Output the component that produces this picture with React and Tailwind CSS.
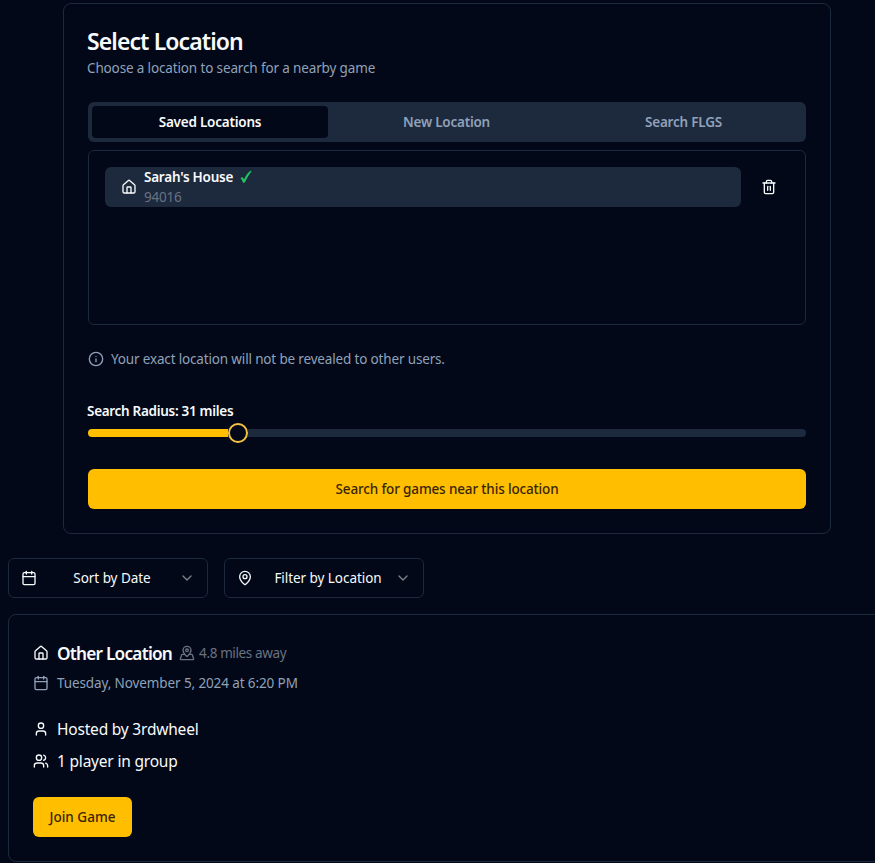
import {
  Calendar,
  ChevronDown,
  House,
  Info,
  MapPin,
  MapPinned,
  Trash2,
  User,
  Users,
} from "lucide-react";

function LocationCard() {
  return (
    <section className="ml-[63px] h-[531px] w-[768px] rounded-lg border border-slate-800 p-6">
      <h1 className="-ml-px flex h-[26px] items-center text-[23px] font-semibold leading-none tracking-[-0.9px]">
        <span>Select Location</span>
      </h1>
      <p className="-ml-px mt-1 text-[13.5px] leading-5 tracking-[-0.14px] text-slate-400">
        Choose a location to search for a nearby game
      </p>
      <div className="mt-6 grid h-10 grid-cols-[236px_237px_237px] rounded-md bg-slate-800 p-1 text-[13.5px] font-semibold tracking-[-0.22px] text-slate-400">
        <button className="rounded-sm bg-[#020817] text-slate-50">Saved Locations</button>
        <button>New Location</button>
        <button>Search FLGS</button>
      </div>
      <div className="mt-2 h-[175px] rounded-md border border-slate-800 p-4">
        <div className="flex h-10 items-center">
          <div className="flex h-10 w-[636px] shrink-0 items-center gap-[7px] rounded-md bg-slate-800 px-4">
            <House size={16} className="shrink-0" />
            <div className="text-[13.5px] leading-5">
              <div className="flex items-center gap-[7px] font-semibold tracking-[-0.23px]">
                <span>Sarah's House</span>
                <Tick />
              </div>
              <div className="tracking-[-0.2px] text-gray-500">94016</div>
            </div>
          </div>
          <button className="flex h-10 w-14 shrink-0 items-center justify-center">
            <Trash2 size={16} />
          </button>
        </div>
      </div>
      <div className="mt-6 flex h-5 items-center gap-[7px] text-[13.5px] tracking-[-0.16px] text-slate-400">
        <Info size={16} />
        <span>Your exact location will not be revealed to other users.</span>
      </div>
      <div className="-ml-px mt-8 text-[13.5px] font-semibold leading-5 tracking-[-0.3px]">
        Search Radius: 31 miles
      </div>
      <div className="mt-0.5 flex h-5 items-center">
        <div className="h-2 w-[140px] rounded-l-full bg-[#ffbf00]" />
        <div className="size-5 shrink-0 rounded-full border-2 border-[#f5c343] bg-[#020817]" />
        <div className="h-2 flex-1 rounded-r-full bg-slate-800" />
      </div>
      <button className="mt-[26px] h-10 w-full rounded-md bg-[#ffbf00] text-[13.5px] font-medium tracking-[-0.15px] text-[#3a2404]">
        Search for games near this location
      </button>
    </section>
  );
}

function Tick() {
  return (
    <svg width="12" height="14" viewBox="0 0 12 14" fill="#22c55e">
      <path d="M0.6 8.2 C1.6 7 2.8 7 3.4 8.2 L4 9.6 C5.8 5.6 8 2.6 10.6 0.8 L11.6 1.4 C9 4.4 6.8 8 5 12.2 L3.2 13 C2.4 11 1.8 9.4 0.6 8.2Z" />
    </svg>
  );
}

function Picker({ icon: Icon, label }) {
  return (
    <button className="flex h-10 w-[200px] items-center justify-between rounded-md border border-slate-800 px-3 text-[13.5px] tracking-[-0.05px]">
      <Icon size={16} className="mr-2" />
      <span>{label}</span>
      <ChevronDown size={16} className="opacity-50" />
    </button>
  );
}

function GameCard() {
  return (
    <section className="ml-2 mt-4 h-[248px] w-[900px] rounded-lg border border-slate-800 p-6">
      <div className="flex h-7 items-center">
        <House size={16} />
        <h2 className="ml-2 pt-0.5 text-[17.25px] font-semibold tracking-[-0.78px]">Other Location</h2>
        <MapPinned size={16} className="ml-[7px] text-gray-500" />
        <span className="ml-1 text-[13.5px] tracking-[-0.38px] text-gray-500">4.8 miles away</span>
      </div>
      <div className="mt-1.5 flex h-5 items-center gap-2 text-[13.5px] tracking-[-0.11px] text-slate-400">
        <Calendar size={16} />
        <span>Tuesday, November 5, 2024 at 6:20 PM</span>
      </div>
      <div className="mt-6 flex h-6 items-center gap-2 text-[15.5px] tracking-[-0.2px]">
        <User size={16} />
        <span className="pt-0.5">Hosted by 3rdwheel</span>
      </div>
      <div className="mt-2 flex h-6 items-center gap-2 text-[15.5px] tracking-[-0.2px]">
        <Users size={16} />
        <span className="pt-0.5">1 player in group</span>
      </div>
      <button className="mt-6 h-10 w-[99px] rounded-md bg-[#ffbf00] text-[13.5px] font-medium text-[#3a2404]">
        Join Game
      </button>
    </section>
  );
}

export default function App() {
  return (
    <main className="h-[863px] w-full overflow-hidden bg-[#020817] pt-[3px] font-['Noto_Sans','Open_Sans',sans-serif] text-slate-50">
      <LocationCard />
      <div className="ml-2 mt-6 flex gap-4">
        <Picker icon={Calendar} label="Sort by Date" />
        <Picker icon={MapPin} label="Filter by Location" />
      </div>
      <GameCard />
    </main>
  );
}
